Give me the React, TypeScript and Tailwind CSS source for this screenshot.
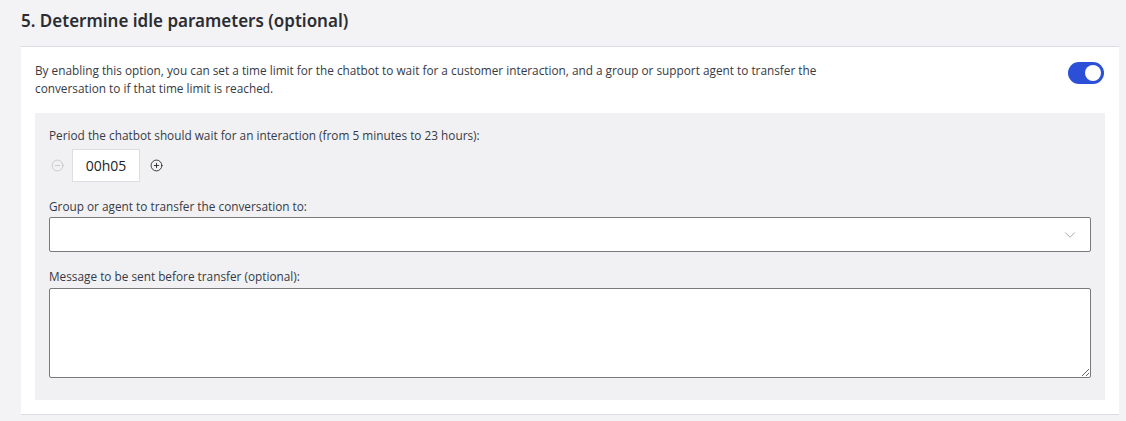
import React from "react";
import { CircleMinus, CirclePlus, ChevronDown } from "lucide-react";

const App = () => {
  return (
    <div className="w-[1126px] h-[421px] bg-[#f3f3f5] pl-[21px] pr-[7px] text-[#363a45] font-['Open_Sans',sans-serif]">
      <div className="h-[46px] flex items-center pb-[4px]">
        <h2 className="text-[17px] font-semibold text-[#2b2d33] font-['Noto_Sans',sans-serif]">
          5. Determine idle parameters (optional)
        </h2>
      </div>
      <div className="bg-white border-t border-b border-[#dcdce2] px-[14px] pt-[14px] pb-[14px]">
        {/* description + toggle */}
        <div className="flex justify-between items-start">
          <p className="w-[810px] text-[11.8px] leading-[18px]">
            By enabling this option, you can set a time limit for the chatbot to wait for a customer interaction, and a group or support agent to transfer the conversation to if that time limit is reached.
          </p>
          <div className="mt-[1px] mr-[1px] w-[36px] h-[22px] rounded-full bg-[#2c4fd7] flex items-center justify-end px-[3px]">
            <div className="w-[16px] h-[16px] rounded-full bg-white" />
          </div>
        </div>
        {/* settings panel */}
        <div className="mt-[16px] bg-[#f1f1f3] px-[14px] pt-[14px] pb-[22px] text-[11.8px]">
          <div className="leading-[16px]">Period the chatbot should wait for an interaction (from 5 minutes to 23 hours):</div>
          <div className="mt-[6px] flex items-center gap-[8px]">
            <CircleMinus size={13} strokeWidth={1.2} className="text-[#b5b5b8] ml-[2px]" />
            <div className="w-[68px] h-[33px] bg-white border border-[#dedee2] flex items-center justify-center text-[14px] text-[#222]">
              00h05
            </div>
            <CirclePlus size={13} strokeWidth={1.6} className="text-[#222] ml-[2px]" />
          </div>
          <div className="mt-[16px] leading-[16px]">Group or agent to transfer the conversation to:</div>
          <div className="mt-[3px] h-[35px] bg-white border border-[#7a7a7a] rounded-[2px] flex items-center justify-end pr-[11px]">
            <ChevronDown size={18} strokeWidth={1} className="text-[#8a8a8a]" />
          </div>
          <div className="mt-[16px] leading-[16px]">Message to be sent before transfer (optional):</div>
          <textarea className="mt-[4px] block w-full h-[90px] bg-white border border-[#7a7a7a] rounded-[2px] resize-y outline-none" />
        </div>
      </div>
    </div>
  );
};

export default App;
